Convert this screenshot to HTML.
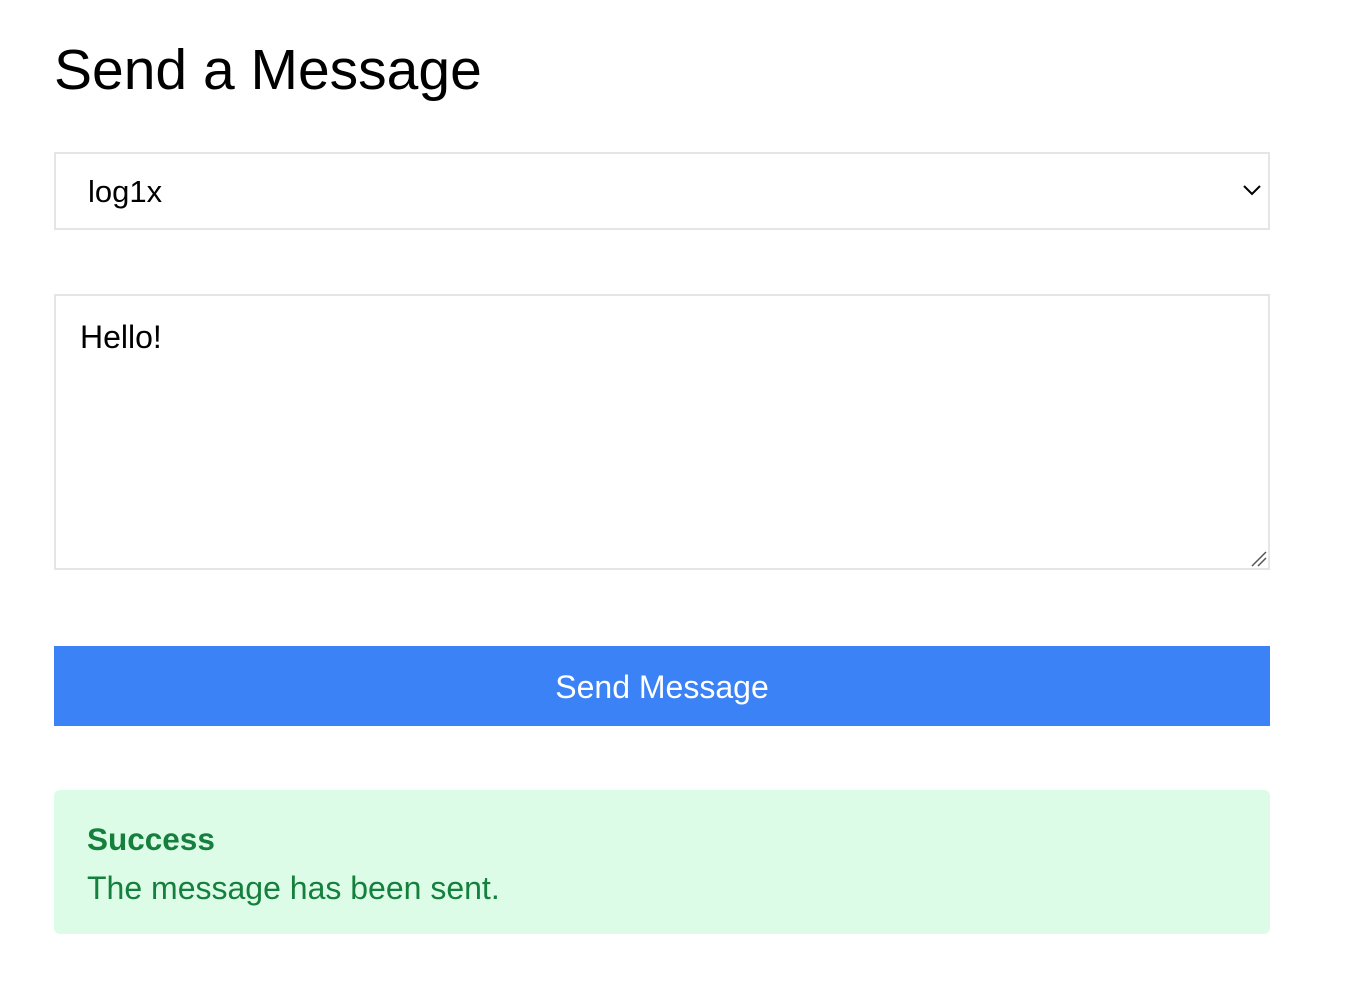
<!DOCTYPE html>
<html><head><meta charset="utf-8"><style>
body{margin:0;background:#fff;font-family:"Liberation Sans",Arial,sans-serif;color:#000;width:1346px;height:994px;overflow:hidden;position:relative}
.a{position:absolute}
h1{position:absolute;left:54px;top:36px;margin:0;font-size:57px;font-weight:normal;line-height:68px}
.box{position:absolute;left:54px;width:1216px;border:2px solid #e5e5e5;box-sizing:border-box}
.t{position:absolute;font-size:31px;line-height:36px}
</style></head><body>
<h1>Send a Message</h1>
<div class="box" style="top:152px;height:78px"></div>
<div class="t" style="left:88px;top:174px">log1x</div>
<svg class="a" style="left:1242px;top:183px" width="20" height="14" viewBox="0 0 20 14"><path d="M2 3 L10 11 L18 3" fill="none" stroke="#000" stroke-width="2"/></svg>
<div class="box" style="top:294px;height:276px"></div>
<div class="t" style="left:80px;top:319px;font-size:32px">Hello!</div>
<svg class="a" style="left:1250px;top:550px" width="18" height="18" viewBox="0 0 18 18"><path d="M2 16 L16 2 M8 16 L16 8" stroke="#555" stroke-width="1.5"/></svg>
<div class="a" style="left:54px;top:646px;width:1216px;height:80px;background:#3b82f6"></div>
<div class="t" style="left:54px;width:1216px;text-align:center;top:669px;color:#fff;font-size:32px">Send Message</div>
<div class="a" style="left:54px;top:790px;width:1216px;height:144px;background:#dcfce7;border-radius:6px"></div>
<div class="t" style="left:87px;top:821px;color:#15803d;font-weight:bold;font-size:31.5px">Success</div>
<div class="t" style="left:87px;top:870px;color:#15803d;font-size:32px">The message has been sent.</div>
</body></html>
